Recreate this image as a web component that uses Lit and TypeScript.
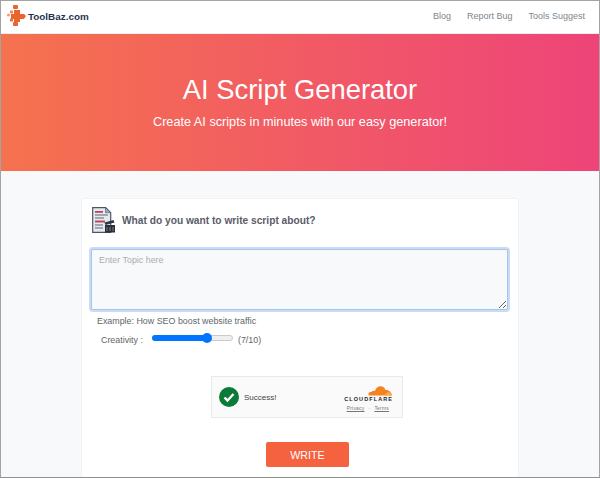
import { LitElement, html, css } from "lit";
import { customElement } from "lit/decorators.js";

@customElement("app-root")
export class AppRoot extends LitElement {
  static styles = css`
    :host { display: block; height: 478px; box-sizing: border-box; border: 1px solid #a3a3a3; border-bottom-color:#8f8f8f; overflow: hidden; background: #f8f9fa; font-family: "Liberation Sans", Arial, sans-serif; }
    nav { box-sizing: border-box; height: 33px; background: #fff; display: flex; align-items: center; justify-content: space-between; padding: 0 14px 2px 5px; border-bottom: 1px solid #eceef0; }
    .brand { display: flex; align-items: center; font-size: 9.9px; font-weight: 700; color: #1f3350; }
    .brand svg { display: block; }
    .links { display: flex; gap: 16px; font-size: 9px; color: #80868e; }
    .hero { height: 137px; background: linear-gradient(90deg, #f5724e, #ee4479); color: #fff; display: flex; flex-direction: column; align-items: center; padding-top: 39px; box-sizing: border-box; }
    h1 { margin: 0; font-size: 27.4px; font-weight: 400; line-height: 34px; }
    .hero p { margin: 6px 0 0; font-size: 12.7px; line-height: 18px; }
    .card { width: 438px; height: 300px; margin: 27px 0 0 80px; background: #fff; border: 1px solid #f1f2f3; border-bottom: 0; box-sizing: border-box; padding: 8px 9px 0; border-radius: 3px 3px 0 0; }
    .head { display: flex; align-items: center; gap: 7px; height: 26px; padding-left: 1px; font-size: 10.2px; font-weight: 700; color: #5a5c69; }
    .head svg { flex: none; }
    textarea { display: block; width: 417px; height: 61px; margin: 16px 0 0 0; box-sizing: border-box; border: 1px solid #a6c5ea; box-shadow: 0 0 0 2px #c9dcf3; outline: 0; border-radius: 2px; background: #f8f9fb; padding: 5px 7px; font: 8.9px "Liberation Sans", Arial, sans-serif; resize: both; }
    textarea::placeholder { color: #a9adb2; opacity: 1; }
    .ex { margin: 5px 0 0 6px; font-size: 8.9px; line-height: 12px; color: #62666b; }
    .cr { display: flex; align-items: center; margin: 6px 0 0 10px; font-size: 8.9px; color: #62666b; height: 14px; }
    .track { position: relative; width: 81px; height: 6px; margin: 0 5px 4px 9px; background: #efefef; border: 1px solid #c9c9c9; border-radius: 3px; box-sizing: border-box; }
    .fill { width: 55px; height: 6px; margin: -1px 0 0 -1px; background: #0075ff; border-radius: 3px; }
    .thumb { position: absolute; left: 49px; top: -3px; width: 10px; height: 10px; border-radius: 50%; background: #0075ff; }
    .ts { width: 192px; height: 42px; margin: 29px 0 0 120px; background: #fafafa; border: 1px solid #eaeaea; box-sizing: border-box; display: flex; align-items: center; padding: 0 10px 0 7px; font-size: 8px; color: #444; gap: 5px; }
    .ts > svg { flex: none; }
    .cf { margin-left: auto; align-self: flex-start; margin-top: 8px; display: flex; flex-direction: column; align-items: flex-end; width: 50px; }
    .cf svg { display: block; }
    .cfname { font-size: 5.5px; font-weight: 700; letter-spacing: 1.1px; margin-right: -1.1px; color: #222; line-height: 6px; white-space: nowrap; }
    .cflinks { font-size: 5px; letter-spacing: .2px; color: #777; display: flex; gap: 4px; line-height: 8px; margin: 2px 3px 0 0; }
    .cflinks u { text-decoration: underline; }
    button { display: block; width: 83px; height: 25px; margin: 24px 0 0 175px; border: 0; border-radius: 2px; background: #f4623f; color: #fff; font: 10.7px "Liberation Sans", Arial, sans-serif; }
  `;
  render() {
    return html`
      <nav>
        <div class="brand">
          <svg width="22" height="22" viewBox="0 0 22 22">
            <g fill="#ea642d">
              <rect x="7" y="0" width="5" height="4" rx="1"/>
              <path d="M8 5h6v4h4l2 2-2 3h-4v3h-6v-3h-3v-5h3z"/>
              <rect x="7" y="17" width="5" height="4" rx="1"/>
              <rect x="4" y="5.5" width="3" height="3" fill="#ef8a5f"/>
              <circle cx="2.5" cy="10" r="1.6" fill="#f2a07e"/>
              <rect x="4" y="13.5" width="3" height="3" fill="#e9743f"/>
            </g>
          </svg>
          <span>ToolBaz.com</span>
        </div>
        <div class="links"><span>Blog</span><span>Report Bug</span><span>Tools Suggest</span></div>
      </nav>
      <div class="hero">
        <h1>AI Script Generator</h1>
        <p>Create AI scripts in minutes with our easy generator!</p>
      </div>
      <div class="card">
        <div class="head">
          <svg width="23" height="26" viewBox="0 0 23 26">
            <path d="M.7 .7h13l5 5v19.600H.7z" fill="#e6eaee" stroke="#4d5560" stroke-width="1.2"/>
            <path d="M13.500 .7v5h5z" fill="#8fb0cf" stroke="#4d5560" stroke-width=".6"/>
            <rect x="3" y="4" width="8" height="1.800" fill="#b9475a"/>
            <path d="M3 8h13M3 11h9M3 18h8M3 21h8" stroke="#5c6570" stroke-width="1.200"/>
            <rect x="3" y="13.500" width="10" height="2" fill="#b9475a"/>
            <rect x="13" y="18" width="10" height="7.500" fill="#2a3038"/>
            <path d="M12.500 15.500l9-2.500 1 2.500-9 2.500z" fill="#2f3640"/>
            <path d="M15 20v4M18 20v4M21 20v4" stroke="#8a929c" stroke-width=".8"/>
          </svg>
          <span>What do you want to write script about?</span>
        </div>
        <textarea placeholder="Enter Topic here"></textarea>
        <div class="ex">Example: How SEO boost website traffic</div>
        <div class="cr">
          <span>Creativity :</span>
          <div class="track"><div class="fill"></div><div class="thumb"></div></div>
          <span>(7/10)</span>
        </div>
        <div class="ts">
          <svg width="20" height="20" viewBox="0 0 20 20">
            <circle cx="10" cy="10" r="10" fill="#0a7a37"/>
            <path d="M5.500 10.500l3 3 6-6.500" fill="none" stroke="#fff" stroke-width="2.400"/>
          </svg>
          <span>Success!</span>
          <div class="cf">
            <svg width="24" height="11" viewBox="0 0 24 11">
              <path d="M1 10.500c-1.500-2 0-4 2.500-3.500 1-1.500 2.500-1.500 3.500-1C8.500 0 16 0 17.500 5c3-.5 6 2 6.500 5.500z" fill="#f6821f"/>
              <path d="M17 10.500c.5-2.500 3-4 5-3 1 .8 1.700 2 2 3z" fill="#fbad41"/>
            </svg>
            <div class="cfname">CLOUDFLARE</div>
            <div class="cflinks"><u>Privacy</u><span>·</span><u>Terms</u></div>
          </div>
        </div>
        <button>WRITE</button>
      </div>
    `;
  }
}
